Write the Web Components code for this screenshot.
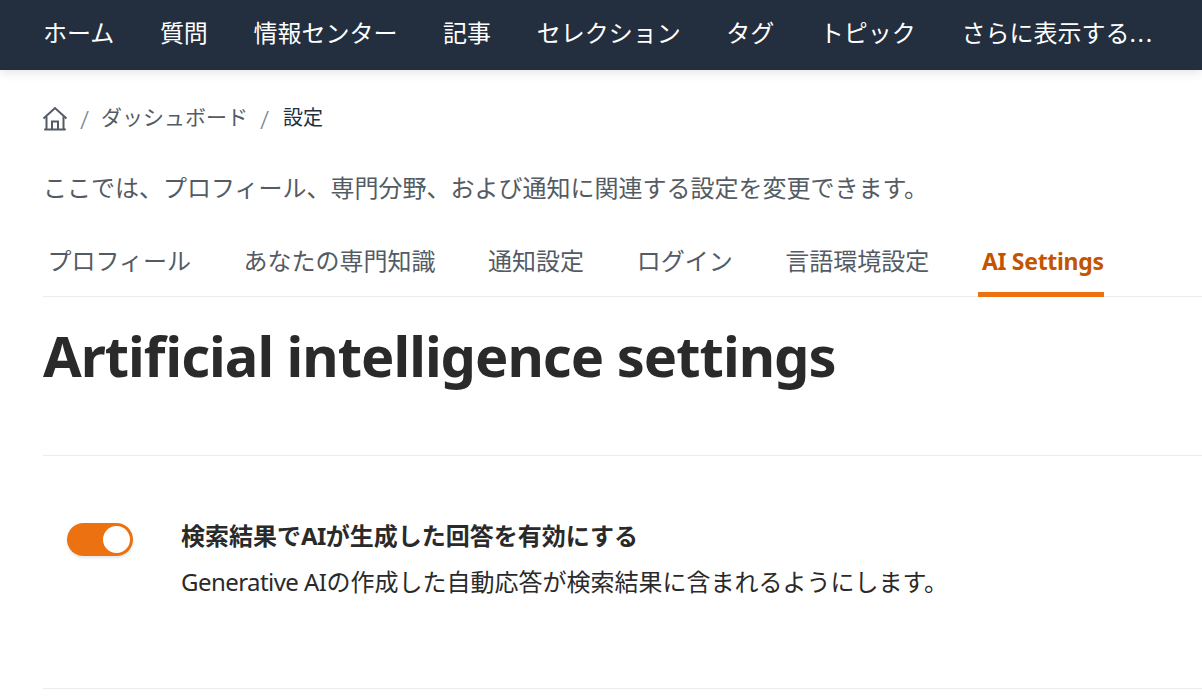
<!DOCTYPE html>
<html lang="ja">
<head>
<meta charset="utf-8">
<title>AI Settings</title>
<style>
html, body { margin: 0; padding: 0; background: #fff; }
body {
    font-family: "Noto Sans", "Noto Sans CJK JP", sans-serif;
    color: #232f3e;
    overflow: hidden;
    height: 697px;
}
.lat { letter-spacing: -0.55px; }
.dots { letter-spacing: 1.7px; }
</style>
</head>
<body>

<top-nav>
    <a>ホーム</a>
    <a>質問</a>
    <a>情報センター</a>
    <a>記事</a>
    <a>セレクション</a>
    <a>タグ</a>
    <a>トピック</a>
    <a>さらに表示する<span class="dots">...</span></a>
</top-nav>

<page-body>
    <bread-crumbs>
        <crumb-item>ダッシュボード</crumb-item>
        <crumb-item current>設定</crumb-item>
    </bread-crumbs>
    <p-intro>ここでは、プロフィール、専門分野、および通知に関連する設定を変更できます。</p-intro>
    <tab-bar>
        <tab-item>プロフィール</tab-item>
        <tab-item>あなたの専門知識</tab-item>
        <tab-item>通知設定</tab-item>
        <tab-item>ログイン</tab-item>
        <tab-item>言語環境設定</tab-item>
        <tab-item active>AI Settings</tab-item>
    </tab-bar>
    <page-title>Artificial intelligence settings</page-title>
    <setting-row>
        <span slot="title">検索結果で<span class="lat">AI</span>が生成した回答を有効にする</span>
        <span class="lat">Generative AI</span>の作成した自動応答が検索結果に含まれるようにします。
    </setting-row>
</page-body>

<script>
(function () {

function simple(name, css, html) {
    customElements.define(name, class extends HTMLElement {
        constructor() {
            super();
            this.attachShadow({ mode: "open" });
            this.shadowRoot.innerHTML = "<style>" + css + "</style>" + html;
        }
    });
}

simple("top-nav", `
    :host{
        display:flex;
        align-items:center;
        gap:45.6px;
        height:70px;
        padding:0 0 8px 43px;
        box-sizing:border-box;
        background:#232f3e;
        color:#fff;
        font-size:24px;
        white-space:nowrap;
        box-shadow:0 2px 10px rgba(0,0,0,.12);
        position:relative;
    }
    ::slotted(a){ color:#fff; }
`, `<slot></slot>`);

simple("page-body", `
    :host{
        display:block;
        padding:0 0 0 43px;
    }
`, `<slot></slot>`);

simple("bread-crumbs", `
    :host{
        display:flex;
        align-items:center;
        height:40px;
        margin-top:26px;
        font-size:21px;
        color:#545b64;
    }
    svg{ flex:none; width:26px; height:26px; margin:3px 0 0 -1px; }
`, `
    <svg viewBox="0 0 26 26" fill="none" stroke="#545b64" stroke-width="2">
        <path d="M1.500 13.500 13 3l11.500 10.500"/>
        <path d="M4.500 11.500V22c0 1.500-.5 2.500-1.500 2.500h20c-1 0-1.500-1-1.500-2.500V11.500" stroke-linejoin="round"/>
        <path d="M10 24.500v-8h6v8"/>
    </svg>
    <slot></slot>
`);

simple("crumb-item", `
    :host{
        display:flex;
        align-items:center;
        white-space:nowrap;
    }
    :host([current]){ color:#232f3e; font-size:20px; }
    :host([current]) .sep{ margin-right:14px; }
    .sep{
        margin:6px 12px 0 12px;
        color:#7d8998;
        font-size:26px;
        line-height:30px;
        font-weight:300;
    }
`, `<span class="sep">/</span><slot></slot>`);

simple("p-intro", `
    :host{
        display:block;
        margin-top:34px;
        font-size:24px;
        line-height:36px;
        color:#545b64;
        white-space:nowrap;
    }
`, `<slot></slot>`);

simple("tab-bar", `
    :host{
        display:flex;
        gap:44.6px;
        margin-top:28px;
        padding-left:.4px;
        height:63px;
        box-sizing:border-box;
        border-bottom:1px solid #eaeded;
        white-space:nowrap;
    }
`, `<slot></slot>`);

simple("tab-item", `
    :host{
        display:block;
        height:63px;
        box-sizing:border-box;
        padding:9px 4px 0;
        font-size:24px;
        line-height:36px;
        color:#545b64;
    }
    :host([active]){
        color:#c45500;
        font-size:23px;
        font-weight:700;
        border-bottom:5px solid #ec7211;
        letter-spacing:-.3px;
        padding-right:0;
    }
`, `<slot></slot>`);

simple("page-title", `
    :host{
        display:block;
        height:159px;
        box-sizing:border-box;
        padding-top:22px;
        border-bottom:1px solid #eaeded;
        font-size:56px;
        line-height:72px;
        font-weight:700;
        letter-spacing:-1px;
        font-feature-settings:"liga" 1;
        color:#2a2a2a;
        white-space:nowrap;
    }
`, `<slot></slot>`);

simple("setting-row", `
    :host{
        display:flex;
        height:233px;
        box-sizing:border-box;
        padding:62px 0 0 24px;
        border-bottom:1px solid #eaeded;
        color:#2a2a2a;
        font-size:24px;
        line-height:36px;
    }
    .toggle{
        flex:none;
        width:66px;
        height:33px;
        margin:5px 48px 0 0;
        border-radius:17px;
        background:#ec7211;
        box-shadow:0 2px 3px rgba(0,0,0,.1);
        display:flex;
        justify-content:flex-end;
        align-items:center;
        padding-right:3px;
        box-sizing:border-box;
    }
    .knob{
        width:27px;
        height:27px;
        border-radius:50%;
        background:#fff;
    }
    .title{ font-weight:700; margin-bottom:10px; }
`, `
    <div class="toggle"><div class="knob"></div></div>
    <div>
        <div class="title"><slot name="title"></slot></div>
        <slot></slot>
    </div>
`);

})();
</script>
</body>
</html>
